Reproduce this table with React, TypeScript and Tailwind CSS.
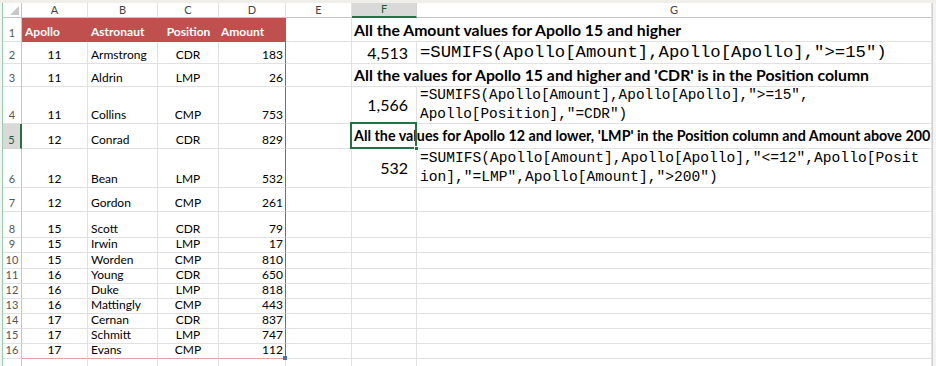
import React from "react";

const data: [number, string, string, number][] = [
  [11, "Armstrong", "CDR", 183],
  [11, "Aldrin", "LMP", 26],
  [11, "Collins", "CMP", 753],
  [12, "Conrad", "CDR", 829],
  [12, "Bean", "LMP", 532],
  [12, "Gordon", "CMP", 261],
  [15, "Scott", "CDR", 79],
  [15, "Irwin", "LMP", 17],
  [15, "Worden", "CMP", 810],
  [16, "Young", "CDR", 650],
  [16, "Duke", "LMP", 818],
  [16, "Mattingly", "CMP", 443],
  [17, "Cernan", "CDR", 837],
  [17, "Schmitt", "LMP", 747],
  [17, "Evans", "CMP", 112],
];

const rowHeights = [24, 22, 23, 37, 25, 39, 24, 26, 15, 16, 15, 15, 15, 15, 15, 15, 20];

const grid = "border-r border-b border-[#e1e1e1]";
const calibri = { fontFamily: "Lato, 'Open Sans', sans-serif" };
const mono = { fontFamily: "'Liberation Mono', 'Courier New', monospace" };

function ColHeader({ label, active }: { label: string; active?: boolean }) {
  return (
    <div
      className={
        active
          ? "flex items-center justify-center bg-[#d9d9d9] border-r border-[#d4d4d4] border-b-2 border-b-[#217346] text-[11px] text-[#1d5c37]"
          : "flex items-center justify-center bg-white border-r border-[#e1e1e1] border-b border-b-[#c6c6c6] text-[11px] text-[#444]"
      }
      style={calibri}
    >
      {label}
    </div>
  );
}

function RowHeader({ n, active }: { n: number; active?: boolean }) {
  return (
    <div
      className={
        active
          ? "flex items-end justify-center pb-[1px] bg-[#d9d9d9] border-b border-[#d4d4d4] border-r-2 border-r-[#217346] text-[11px] text-[#1d5c37] leading-[14px]"
          : "flex items-end justify-center pb-[1px] bg-white border-b border-[#e1e1e1] border-r border-r-[#c6c6c6] text-[11px] text-[#555] leading-[14px]"
      }
      style={calibri}
    >
      {n}
    </div>
  );
}

export default function App() {
  const rowsTemplate = "15px " + rowHeights.map((h) => h + "px").join(" ");
  return (
    <div className="w-[936px] h-[366px] overflow-hidden bg-white flex flex-col">
      <div className="h-[3px] shrink-0 bg-[#efeee9]" />
      <div className="flex flex-1 min-h-0">
        <div className="w-[2px] shrink-0 bg-[#f4f4f4]" />
        <div className="w-[1px] shrink-0 bg-[#97cfae]" />
        <div
          className="grid shrink-0 grid-cols-[19px_66px_70px_61px_67px_66px_65px_515px] text-black"
          style={{ gridTemplateRows: rowsTemplate, ...calibri }}
        >
          {/* column header row */}
          <div className="relative bg-white border-r border-r-[#c6c6c6] border-b border-b-[#c6c6c6]">
            <svg className="absolute right-[2px] bottom-[2px]" width="9" height="9" viewBox="0 0 9 9">
              <polygon points="9,0 9,9 0,9" fill="#c8c8c8" />
            </svg>
          </div>
          <ColHeader label="A" />
          <ColHeader label="B" />
          <ColHeader label="C" />
          <ColHeader label="D" />
          <ColHeader label="E" />
          <ColHeader label="F" active />
          <ColHeader label="G" />

          {/* Row 1 */}
          <RowHeader n={1} />
          <div className="flex items-end pb-[3px] pl-[3px] bg-[#c0504d] text-white font-bold text-[12px] leading-[15px]">Apollo</div>
          <div className="flex items-end pb-[3px] pl-[3px] bg-[#c0504d] text-white font-bold text-[12px] leading-[15px]">Astronaut</div>
          <div className="flex items-end justify-center pb-[3px] bg-[#c0504d] text-white font-bold text-[12px] leading-[15px]">Position</div>
          <div className="flex items-end pb-[3px] pl-[2px] bg-[#c0504d] text-white font-bold text-[12px] leading-[15px]">Amount</div>
          <div className={grid} />
          <div className={"col-span-2 flex items-center pl-[2px] font-bold text-[15.8px] whitespace-nowrap " + grid}>
            All the Amount values for Apollo 15 and higher
          </div>

          {data.map((r, i) => {
            const rowNum = i + 2;
            const last = i === data.length - 1;
            const tb = last ? "border-r border-r-[#e1e1e1] border-b border-b-[#e6a3a1]" : grid;
            const dcls = last
              ? "border-r border-r-[#c0504d] border-b border-b-[#e6a3a1]"
              : "border-r border-r-[#c0504d] border-b border-b-[#e1e1e1]";
            const txt = "text-[12px] leading-[15px] pb-[1px]";
            let right: React.ReactNode;
            if (rowNum === 2) {
              right = (
                <>
                  <div className={"flex items-center justify-end pr-[8px] text-[16px] " + grid}>4,513</div>
                  <div className={"flex items-center pl-[3px] text-[17.3px] whitespace-nowrap " + grid} style={mono}>
                    =SUMIFS(Apollo[Amount],Apollo[Apollo],"&gt;=15")
                  </div>
                </>
              );
            } else if (rowNum === 3) {
              right = (
                <div className={"col-span-2 flex items-center pl-[2px] font-bold text-[15.8px] whitespace-nowrap " + grid}>
                  All the values for Apollo 15 and higher and 'CDR' is in the Position column
                </div>
              );
            } else if (rowNum === 4) {
              right = (
                <>
                  <div className={"flex items-center justify-end pr-[8px] text-[16px] " + grid}>1,566</div>
                  <div className={"flex flex-col justify-center pl-[3px] text-[14.4px] leading-[19px] whitespace-nowrap " + grid} style={mono}>
                    <div>=SUMIFS(Apollo[Amount],Apollo[Apollo],"&gt;=15",</div>
                    <div>Apollo[Position],"=CDR")</div>
                  </div>
                </>
              );
            } else if (rowNum === 5) {
              right = (
                <div className={"relative col-span-2 flex items-center pl-[2px] font-bold text-[14.3px] whitespace-nowrap " + grid}>
                  All the values for Apollo 12 and lower, 'LMP' in the Position column and Amount above 200
                  <div className="absolute left-[-2px] top-[-2px] w-[67px] h-[27px] border-2 border-[#217346]" />
                  <div className="absolute left-[62px] top-[22px] w-[5px] h-[5px] bg-[#217346] border border-white" />
                </div>
              );
            } else if (rowNum === 6) {
              right = (
                <>
                  <div className={"flex items-center justify-end pr-[8px] text-[16px] " + grid}>532</div>
                  <div className={"flex flex-col justify-center pl-[3px] text-[14.6px] leading-[19px] whitespace-nowrap " + grid} style={mono}>
                    <div>=SUMIFS(Apollo[Amount],Apollo[Apollo],"&lt;=12",Apollo[Posit</div>
                    <div>ion],"=LMP",Apollo[Amount],"&gt;200")</div>
                  </div>
                </>
              );
            } else {
              right = (
                <>
                  <div className={grid} />
                  <div className={grid} />
                </>
              );
            }
            return (
              <React.Fragment key={rowNum}>
                <RowHeader n={rowNum} active={rowNum === 5} />
                <div className={"flex items-end justify-center " + txt + " " + tb}>{r[0]}</div>
                <div className={"flex items-end pl-[3px] " + txt + " " + tb}>{r[1]}</div>
                <div className={"flex items-end justify-center " + txt + " " + tb}>{r[2]}</div>
                <div className={"relative flex items-end justify-end pr-[2px] " + txt + " " + dcls}>
                  {r[3]}
                  {last && <div className="absolute right-[-2px] bottom-[-2px] w-[4px] h-[4px] bg-[#4a6fb5]" />}
                </div>
                <div className={grid} />
                {right}
              </React.Fragment>
            );
          })}

          {/* Row 17 */}
          <RowHeader n={17} />
          <div className={grid} />
          <div className={grid} />
          <div className={grid} />
          <div className={grid} />
          <div className={grid} />
          <div className={grid} />
          <div className={grid} />
        </div>
        <div className="flex-1 bg-[#f3f3f3] border-l border-[#d0d0d0]" />
      </div>
    </div>
  );
}
